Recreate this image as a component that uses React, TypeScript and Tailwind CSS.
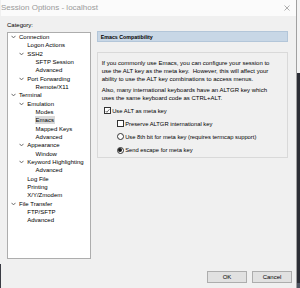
import React from "react";

type Item = { lvl: number; label: string; exp?: boolean; sel?: boolean };

const items: Item[] = [
  { lvl: 0, label: "Connection", exp: true },
  { lvl: 1, label: "Logon Actions" },
  { lvl: 1, label: "SSH2", exp: true },
  { lvl: 2, label: "SFTP Session" },
  { lvl: 2, label: "Advanced" },
  { lvl: 1, label: "Port Forwarding", exp: true },
  { lvl: 2, label: "Remote/X11" },
  { lvl: 0, label: "Terminal", exp: true },
  { lvl: 1, label: "Emulation", exp: true },
  { lvl: 2, label: "Modes" },
  { lvl: 2, label: "Emacs", sel: true },
  { lvl: 2, label: "Mapped Keys" },
  { lvl: 2, label: "Advanced" },
  { lvl: 1, label: "Appearance", exp: true },
  { lvl: 2, label: "Window" },
  { lvl: 1, label: "Keyword Highlighting", exp: true },
  { lvl: 2, label: "Advanced" },
  { lvl: 1, label: "Log File" },
  { lvl: 1, label: "Printing" },
  { lvl: 1, label: "X/Y/Zmodem" },
  { lvl: 0, label: "File Transfer", exp: true },
  { lvl: 1, label: "FTP/SFTP" },
  { lvl: 1, label: "Advanced" },
];

const indent = ["pl-[3px]", "pl-[11.3px]", "pl-[19.6px]"];

function Chevron() {
  return (
    <svg width="5" height="4" viewBox="0 0 5 4" className="block">
      <polyline points="0.5,0.8 2.5,2.9 4.5,0.8" fill="none" stroke="#5a5a5a" strokeWidth="0.9" />
    </svg>
  );
}

function CheckBox({ checked }: { checked?: boolean }) {
  return (
    <div className="w-[7px] h-[7px] border border-[#333333] bg-white flex items-center justify-center shrink-0">
      {checked && (
        <svg width="6" height="6" viewBox="0 0 6 6" className="block">
          <polyline points="0.8,3 2.3,4.6 5.3,0.9" fill="none" stroke="#222" strokeWidth="0.8" />
        </svg>
      )}
    </div>
  );
}

function Radio({ checked }: { checked?: boolean }) {
  return (
    <div className="w-[7px] h-[7px] rounded-full border border-[#333333] bg-white flex items-center justify-center shrink-0">
      {checked && <div className="w-[3.5px] h-[3.5px] rounded-full bg-[#1a1a1a]" />}
    </div>
  );
}

export default function App() {
  return (
    <div
      className="flex w-[300px] h-[288px] overflow-hidden text-black"
      style={{ fontFamily: '"Liberation Sans", Arial, sans-serif' }}
    >
      {/* left edge */}
      <div className="w-[1px] flex flex-col">
        <div className="flex-1 bg-[#f0f0f0]" />
        <div className="h-[24px] bg-[#3a3c44]" />
      </div>

      {/* dialog */}
      <div className="w-[295px] h-full bg-[#f0f0f0] flex flex-col">
        <div className="h-[16px] bg-[#fbfbfb] flex items-center justify-between pr-[6px]">
          <span className="text-[8px] leading-[10px] text-[#9a9a9a]">Session Options - localhost</span>
          <svg width="6" height="6" viewBox="0 0 6 6" className="block mb-[1px]">
            <path d="M0.5 0.5 L5.5 5.5 M5.5 0.5 L0.5 5.5" stroke="#9a9a9a" strokeWidth="0.8" />
          </svg>
        </div>

        <div className="mt-[5px] pl-[6px] text-[6px] leading-[8px]">Category:</div>

        <div className="mt-[2px] flex items-start">
          {/* tree */}
          <div className="ml-[5.7px] mt-[1px] w-[84px] h-[227px] bg-white border border-[#adadad] flex flex-col pt-[0px] overflow-hidden">
            {items.map((it, i) => (
              <div key={i} className={`h-[8.33px] flex items-center ${indent[it.lvl]}`}>
                <div className="w-[8.3px] flex items-center">{it.exp && <Chevron />}</div>
                <span
                  className={`text-[6px] leading-[8px] px-[1px] -ml-[1px] ${it.sel ? "bg-[#d9d9d9]" : ""}`}
                >
                  {it.label}
                </span>
              </div>
            ))}
          </div>

          {/* right panel */}
          <div className="ml-[6px] w-[191px] flex flex-col">
            <div className="h-[11px] bg-[#c8d7e6] border border-[#b3c6d9] flex items-center pl-[3px]">
              <span className="text-[5.3px] font-bold leading-[8px]">Emacs Compatibility</span>
            </div>

            <div className="mt-[10px] h-[106px] border border-[#d9d9d9] flex flex-col pt-[6px] pl-[4px] text-[6px] leading-[8px]">
              <p>If you commonly use Emacs, you can configure your session to</p>
              <p>use the ALT key as the meta key.&nbsp; However, this will affect your</p>
              <p>ability to use the ALT key combinations to access menus.</p>
              <p className="mt-[3px]">Also, many international keyboards have an ALTGR key which</p>
              <p>uses the same keyboard code as CTRL+ALT.</p>

              <div className="mt-[2px] h-[13.2px] flex items-center pl-[2px] gap-[1.5px]">
                <CheckBox checked />
                <span className="text-[5.8px]">Use ALT as meta key</span>
              </div>
              <div className="h-[13.2px] flex items-center pl-[15px] gap-[1.5px]">
                <CheckBox />
                <span className="text-[5.8px]">Preserve ALTGR international key</span>
              </div>
              <div className="h-[13.2px] flex items-center pl-[15px] gap-[1.5px]">
                <Radio />
                <span className="text-[5.8px]">Use 8th bit for meta key (requires termcap support)</span>
              </div>
              <div className="h-[13.2px] flex items-center pl-[15px] gap-[1.5px]">
                <Radio checked />
                <span className="text-[5.8px]">Send escape for meta key</span>
              </div>
            </div>
          </div>
        </div>

        <div className="mt-[12px] flex justify-end gap-[5px] pr-[4px]">
          <button className="w-[40px] h-[12px] bg-[#e1e1e1] border border-[#adadad] text-[6px] leading-[10px] flex items-center justify-center">
            OK
          </button>
          <button className="w-[40px] h-[12px] bg-[#e1e1e1] border border-[#adadad] text-[6px] leading-[10px] flex items-center justify-center">
            Cancel
          </button>
        </div>
      </div>

      {/* right edge: background windows */}
      <div className="w-[4px] h-full flex flex-col border-l border-[#a0a0a0]">
        <div className="h-[73px] bg-[#f3f3f3]" />
        <div className="flex-1 bg-[#2b2d35]" />
        <div className="h-[5px] bg-[#4e5562]" />
      </div>
    </div>
  );
}
